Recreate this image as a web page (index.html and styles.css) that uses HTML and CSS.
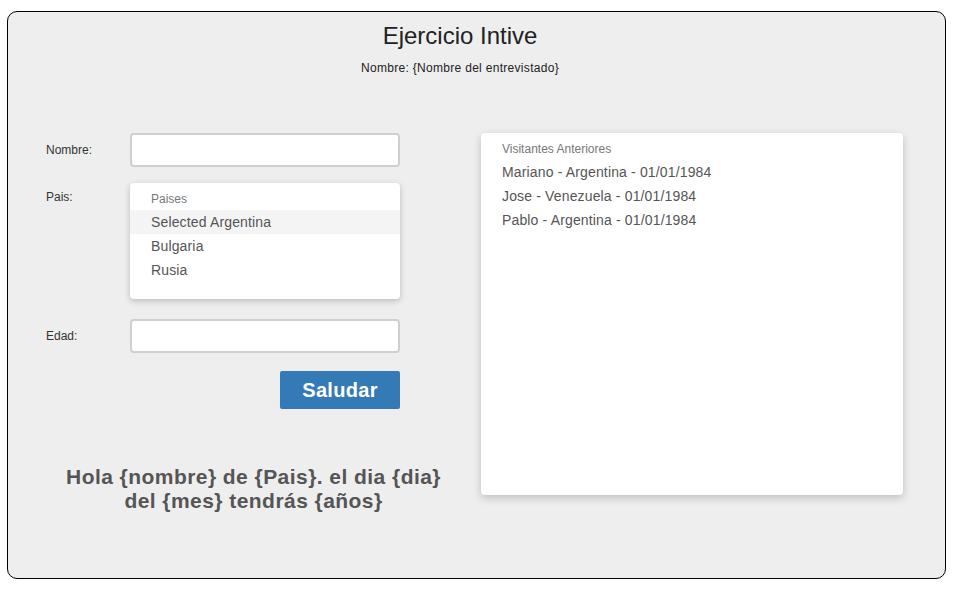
FILE: index.html
```html
<!DOCTYPE html>
<html lang="es">
<head>
<meta charset="utf-8">
<title>Ejercicio Intive</title>
<link rel="stylesheet" href="styles.css">
</head>
<body>
<div class="card">
  <header class="header">
    <h1 class="title">Ejercicio Intive</h1>
    <p class="subtitle">Nombre: {Nombre del entrevistado}</p>
  </header>
  <div class="row">
    <div class="left">
      <div class="form-row">
        <label class="label label-mid">Nombre:</label>
        <div class="input"></div>
      </div>
      <div class="form-row form-row-top gap-16">
        <label class="label label-top">Pais:</label>
        <div class="listbox">
          <div class="list-header">Paises</div>
          <div class="option selected">Selected Argentina</div>
          <div class="option">Bulgaria</div>
          <div class="option">Rusia</div>
        </div>
      </div>
      <div class="form-row gap-20">
        <label class="label label-mid">Edad:</label>
        <div class="input"></div>
      </div>
      <div class="btn-row">
        <button class="btn">Saludar</button>
      </div>
      <p class="hola">Hola {nombre} de {Pais}. el dia {dia} del {mes} tendrás {años}</p>
    </div>
    <div class="panel">
      <div class="list-header">Visitantes Anteriores</div>
      <div class="option">Mariano - Argentina - 01/01/1984</div>
      <div class="option">Jose - Venezuela - 01/01/1984</div>
      <div class="option">Pablo - Argentina - 01/01/1984</div>
    </div>
  </div>
</div>
</body>
</html>
```

FILE: styles.css
```css
* { box-sizing: border-box; }
html, body {
  margin: 0;
  padding: 0;
  background: #fff;
  font-family: "Liberation Sans", Arial, sans-serif;
}
.card {
  margin: 11px 17px 0 7px;
  height: 568px;
  border: 1px solid #000;
  border-radius: 10px;
  background: #eeeeee;
}
.header {
  padding-top: 10px;
  margin-right: 33px;
  text-align: center;
  color: #222;
}
.title {
  margin: 0;
  font-size: 24px;
  font-weight: normal;
  line-height: normal;
}
.subtitle {
  margin: 11px 0 0;
  font-size: 12px;
  letter-spacing: 0.3px;
  line-height: normal;
}
.row {
  display: flex;
  margin-top: 58px;
  padding-left: 28px;
  gap: 10px;
  align-items: flex-start;
}
.left {
  width: 435px;
  padding-left: 10px;
}
.form-row {
  display: flex;
  align-items: center;
}
.form-row-top { align-items: flex-start; }
.gap-16 { margin-top: 16px; }
.gap-20 { margin-top: 20px; }
.label {
  width: 84px;
  font-size: 12px;
  color: #333;
}
.label-top { padding-top: 7px; }
.input {
  width: 270px;
  height: 34px;
  background: #fff;
  border: 2px solid #cfcfcf;
  border-radius: 4px;
}
.listbox {
  width: 270px;
  height: 116px;
  background: #fff;
  border-radius: 4px;
  padding-top: 5px;
  box-shadow: 0 2px 6px rgba(0, 0, 0, 0.22);
}
.list-header {
  height: 22px;
  line-height: 22px;
  padding-left: 21px;
  font-size: 12px;
  color: #777;
}
.option {
  height: 24px;
  line-height: 24px;
  padding-left: 21px;
  font-size: 14px;
  letter-spacing: 0.15px;
  color: #555;
}
.option.selected { background: #f4f4f4; }
.btn-row {
  display: flex;
  justify-content: flex-end;
  width: 354px;
  margin-top: 18px;
}
.btn {
  width: 120px;
  height: 38px;
  border: none;
  border-radius: 2px;
  background: #337ab7;
  color: #fff;
  font-family: "Liberation Sans", Arial, sans-serif;
  font-size: 20px;
  font-weight: bold;
  letter-spacing: 0.3px;
  padding: 0;
}
.hola {
  margin: 56px auto 0;
  width: 400px;
  transform: translateX(-5px);
  text-align: center;
  font-size: 21px;
  letter-spacing: 0.45px;
  line-height: 24px;
  font-weight: bold;
  color: #555;
}
.panel {
  width: 422px;
  height: 362px;
  background: #fff;
  border-radius: 4px;
  padding-top: 5px;
  box-shadow: 0 3px 8px rgba(0, 0, 0, 0.2);
}
```
